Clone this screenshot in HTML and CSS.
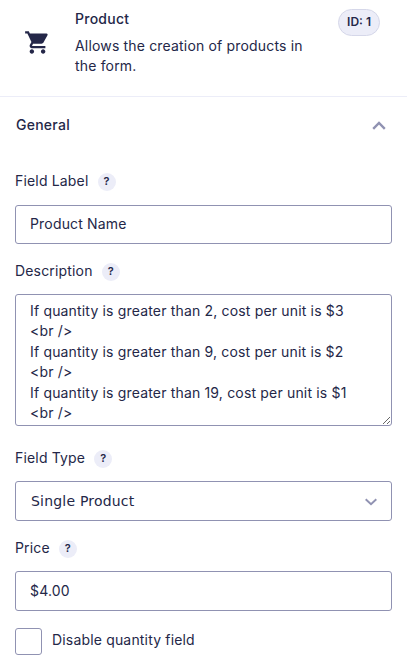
FILE: index.html
```html
<!DOCTYPE html>
<html lang="en">
<head>
    <meta charset="UTF-8">
    <meta name="viewport" content="width=device-width, initial-scale=1.0">
    <title>Product Field Settings</title>
    <link rel="stylesheet" href="styles.css">
</head>
<body>
    <div class="field-header">
        <svg class="cart-icon" viewBox="0 0 24 24">
            <path d="M7 18c-1.1 0-1.99.9-1.99 2S5.9 22 7 22s2-.9 2-2-.9-2-2-2zM1 2v2h2l3.6 7.59-1.35 2.45c-.16.28-.25.61-.25.96 0 1.1.9 2 2 2h12v-2H7.42c-.14 0-.25-.11-.25-.25l.03-.12.9-1.63h7.45c.75 0 1.41-.41 1.75-1.03l3.58-6.49A1 1 0 0 0 20 4H5.21l-.94-2H1zm16 16c-1.1 0-1.99.9-1.99 2s.89 2 1.99 2 2-.9 2-2-.9-2-2-2z"/>
        </svg>
        <div class="field-info">
            <div class="field-name">Product</div>
            <div class="field-desc">Allows the creation of products in the form.</div>
        </div>
        <span class="field-id">ID: 1</span>
    </div>

    <div class="panel-title">
        <span>General</span>
        <svg class="panel-arrow" viewBox="0 0 14 9">
            <path d="M1.2 7.8L7 2l5.8 5.8"/>
        </svg>
    </div>

    <div class="settings">
        <div class="setting">
            <div class="label-row">
                <label for="label">Field Label</label>
                <span class="help">?</span>
            </div>
            <input class="control text-input" id="label" type="text" value="Product Name">
        </div>

        <div class="setting setting-description">
            <div class="label-row">
                <label for="description">Description</label>
                <span class="help">?</span>
            </div>
            <textarea class="control text-area" id="description">If quantity is greater than 2, cost per unit is $3
&lt;br /&gt;
If quantity is greater than 9, cost per unit is $2
&lt;br /&gt;
If quantity is greater than 19, cost per unit is $1
&lt;br /&gt;</textarea>
        </div>

        <div class="setting setting-type">
            <div class="label-row">
                <label for="type">Field Type</label>
                <span class="help">?</span>
            </div>
            <div class="select-wrap">
                <select class="control select" id="type">
                    <option>Single Product</option>
                </select>
                <svg class="select-arrow" viewBox="0 0 12 8">
                    <path d="M.7 1.2L6 6.3l5.3-5.1"/>
                </svg>
            </div>
        </div>

        <div class="setting setting-price">
            <div class="label-row">
                <label for="price">Price</label>
                <span class="help">?</span>
            </div>
            <input class="control text-input price-input" id="price" type="text" value="$4.00">
        </div>

        <div class="check-row">
            <input class="checkbox" id="disable" type="checkbox">
            <label for="disable">Disable quantity field</label>
        </div>
    </div>
</body>
</html>
```
FILE: styles.css
```css
* {
    box-sizing: border-box;
}

body {
    margin: 0;
    height: 664px;
    overflow: hidden;
    background-color: #fff;
    color: #242748;
    font-family: Inter, "Liberation Sans", sans-serif;
    font-size: 14px;
    letter-spacing: 0.17px;
}

.field-header {
    display: flex;
    align-items: flex-start;
    height: 97px;
    padding: 9px 27px 0 24px;
    border-bottom: 1px solid #ecedf8;
}

.cart-icon {
    width: 27px;
    height: 27px;
    margin: 20px 24px 0 0;
    fill: #242748;
}

.field-info {
    flex: 1;
    line-height: 20px;
}

.field-name {
    font-weight: 500;
    letter-spacing: 0.25px;
    margin-bottom: 7px;
}

.field-desc {
    width: 240px;
}

.field-id {
    height: 27px;
    padding: 0 8px;
    border: 1px solid #d5d7e9;
    border-radius: 14px;
    background-color: #ecedf8;
    font-size: 12px;
    font-weight: 600;
    line-height: 24px;
    letter-spacing: 0;
}

.panel-title {
    display: flex;
    justify-content: space-between;
    align-items: center;
    height: 56px;
    padding: 0 21px 0 16px;
    font-weight: 500;
    letter-spacing: 0.25px;
}

.panel-title span {
    padding-bottom: 2px;
}

.panel-arrow {
    width: 14px;
    height: 9px;
    fill: none;
    stroke: #9092b2;
    stroke-width: 2.4;
}

.settings {
    padding: 18px 15px 0;
}

.label-row {
    display: flex;
    align-items: center;
    gap: 9px;
    height: 20px;
    margin-bottom: 14px;
}

.label-row label {
    padding-bottom: 2px;
}

.help {
    width: 18px;
    height: 18px;
    margin-top: 2px;
    border-radius: 50%;
    background-color: #ecedf8;
    font-size: 11px;
    font-weight: 600;
    line-height: 17px;
    text-align: center;
    letter-spacing: 0;
}

.control {
    display: block;
    width: 100%;
    margin: 0;
    padding: 0 14px;
    border: 1px solid #9092b2;
    border-radius: 3px;
    background-color: #fff;
    color: #242748;
    font: inherit;
    letter-spacing: inherit;
    outline: none;
}

.text-input {
    height: 39px;
    padding: 0 14px 2px;
}

.setting-description {
    margin-top: 17px;
}

.setting-description .label-row {
    margin-bottom: 13px;
}

.text-area {
    height: 132px;
    padding: 6px 14px;
    line-height: 20.4px;
    overflow: hidden;
    resize: vertical;
}

.setting-type {
    margin-top: 22px;
}

.setting-type .label-row {
    margin-bottom: 13px;
}

.select-wrap {
    position: relative;
}

.select {
    height: 40px;
    padding: 0 15px;
    appearance: none;
    font-family: "DejaVu Sans", sans-serif;
    letter-spacing: 0.2px;
}

/* sits over the native select */
.select-arrow {
    position: absolute;
    top: 17px;
    right: 15px;
    width: 12px;
    height: 8px;
    fill: none;
    stroke: #9092b2;
    stroke-width: 1.9;
    pointer-events: none;
}

.setting-price {
    margin-top: 17px;
}

.setting-price .label-row {
    margin-bottom: 13px;
}

.price-input {
    height: 40px;
}

.check-row {
    display: flex;
    align-items: center;
    gap: 10px;
    margin-top: 17px;
}

.checkbox {
    width: 27px;
    height: 27px;
    margin: 0;
    border: 1px solid #9092b2;
    border-radius: 3px;
    appearance: none;
}

.check-row label {
    margin-top: -4px;
}
```
